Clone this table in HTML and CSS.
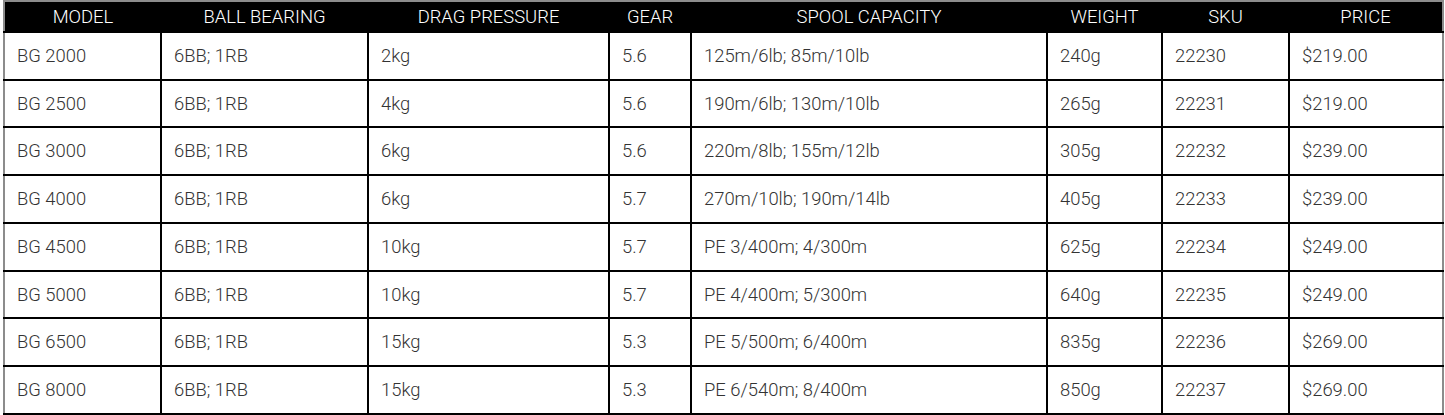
FILE: index.html
```html
<!DOCTYPE html>
<html lang="en">
<head>
<meta charset="utf-8">
<title>Reel specifications</title>
<link rel="stylesheet" href="styles.css">
</head>
<body>
<table class="spec">
  <colgroup>
    <col class="c-model">
    <col class="c-bb">
    <col class="c-drag">
    <col class="c-gear">
    <col class="c-spool">
    <col class="c-weight">
    <col class="c-sku">
    <col class="c-price">
  </colgroup>
  <thead>
    <tr>
      <th>MODEL</th><th>BALL BEARING</th><th>DRAG PRESSURE</th><th>GEAR</th><th>SPOOL CAPACITY</th><th>WEIGHT</th><th>SKU</th><th>PRICE</th>
    </tr>
  </thead>
  <tbody>
    <tr><td>BG 2000</td><td>6BB; 1RB</td><td>2kg</td><td>5.6</td><td>125m/6lb; 85m/10lb</td><td>240g</td><td>22230</td><td>$219.00</td></tr>
    <tr><td>BG 2500</td><td>6BB; 1RB</td><td>4kg</td><td>5.6</td><td>190m/6lb; 130m/10lb</td><td>265g</td><td>22231</td><td>$219.00</td></tr>
    <tr><td>BG 3000</td><td>6BB; 1RB</td><td>6kg</td><td>5.6</td><td>220m/8lb; 155m/12lb</td><td>305g</td><td>22232</td><td>$239.00</td></tr>
    <tr><td>BG 4000</td><td>6BB; 1RB</td><td>6kg</td><td>5.7</td><td>270m/10lb; 190m/14lb</td><td>405g</td><td>22233</td><td>$239.00</td></tr>
    <tr><td>BG 4500</td><td>6BB; 1RB</td><td>10kg</td><td>5.7</td><td>PE 3/400m; 4/300m</td><td>625g</td><td>22234</td><td>$249.00</td></tr>
    <tr><td>BG 5000</td><td>6BB; 1RB</td><td>10kg</td><td>5.7</td><td>PE 4/400m; 5/300m</td><td>640g</td><td>22235</td><td>$249.00</td></tr>
    <tr><td>BG 6500</td><td>6BB; 1RB</td><td>15kg</td><td>5.3</td><td>PE 5/500m; 6/400m</td><td>835g</td><td>22236</td><td>$269.00</td></tr>
    <tr><td>BG 8000</td><td>6BB; 1RB</td><td>15kg</td><td>5.3</td><td>PE 6/540m; 8/400m</td><td>850g</td><td>22237</td><td>$269.00</td></tr>
  </tbody>
</table>
</body>
</html>
```
FILE: styles.css
```css
html, body {
  margin: 0;
  padding: 0;
  background: #fff;
}

body {
  padding: 0 3px;
  font-family: Roboto, "Liberation Sans", Arial, sans-serif;
}

.spec {
  border-collapse: collapse;
  table-layout: fixed;
  width: 1439px;
  border: 2px solid #8c8c8c;
  border-bottom-color: #000;
}

.c-model  { width: 157px; }
.c-bb     { width: 207px; }
.c-drag   { width: 241px; }
.c-gear   { width: 82px; }
.c-spool  { width: 356px; }
.c-weight { width: 115px; }
.c-sku    { width: 127px; }
.c-price  { width: 154px; }

.spec th {
  background: #000;
  color: #fff;
  font-weight: 300;
  font-size: 18.4px;
  line-height: 20px;
  padding: 5px 4px 4px;
  text-align: center;
  border: 0;
}

.spec td {
  color: #333;
  font-weight: 300;
  font-size: 18.4px;
  line-height: 21.7px;
  padding: 12px 12px;
  text-align: left;
  vertical-align: middle;
  border: 2px solid #000;
}

.spec td:first-child {
  border-left: none;
}

.spec td:last-child {
  border-right: none;
}
```
